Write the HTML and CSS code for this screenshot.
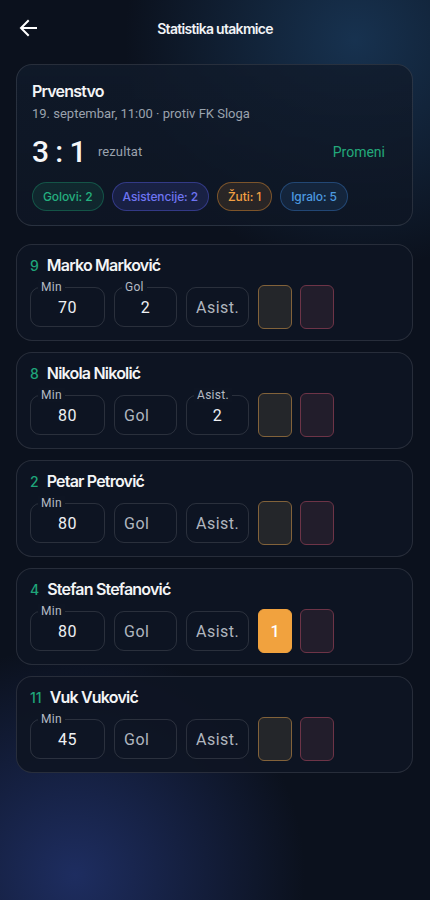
FILE: index.html
```html
<!DOCTYPE html>
<html lang="sr">
<head>
<meta charset="utf-8">
<title>Statistika utakmice</title>
<link rel="stylesheet" href="styles.css">
</head>
<body>
<div class="page">
  <header class="topbar">
    <button class="back" aria-label="Nazad">
      <svg width="18" height="18" viewBox="0 0 18 18" fill="none" stroke="#ffffff" stroke-width="2" stroke-linecap="square"><path d="M17 9H2.5M9 2L2 9l7 7"/></svg>
    </button>
    <h1 class="title">Statistika utakmice</h1>
  </header>

  <main class="content">
    <section class="summary">
      <h2 class="comp">Prvenstvo</h2>
      <div class="meta">19. septembar, 11:00 · protiv FK Sloga</div>
      <div class="score-row">
        <span class="score">3 : 1</span>
        <span class="score-label">rezultat</span>
        <button class="change">Promeni</button>
      </div>
      <div class="chips">
        <span class="chip chip-green">Golovi: 2</span>
        <span class="chip chip-indigo">Asistencije: 2</span>
        <span class="chip chip-orange">Žuti: 1</span>
        <span class="chip chip-blue">Igralo: 5</span>
      </div>
    </section>

    <section class="player">
      <div class="pname"><span class="num">9</span>Marko Marković</div>
      <div class="fields">
        <div class="field f-min"><span class="flabel">Min</span><span class="val">70</span></div>
        <div class="field f-sm"><span class="flabel">Gol</span><span class="val">2</span></div>
        <div class="field f-sm"><span class="ph">Asist.</span></div>
        <div class="ycard"></div>
        <div class="rcard"></div>
      </div>
    </section>

    <section class="player">
      <div class="pname"><span class="num">8</span>Nikola Nikolić</div>
      <div class="fields">
        <div class="field f-min"><span class="flabel">Min</span><span class="val">80</span></div>
        <div class="field f-sm"><span class="ph">Gol</span></div>
        <div class="field f-sm"><span class="flabel">Asist.</span><span class="val">2</span></div>
        <div class="ycard"></div>
        <div class="rcard"></div>
      </div>
    </section>

    <section class="player">
      <div class="pname"><span class="num">2</span>Petar Petrović</div>
      <div class="fields">
        <div class="field f-min"><span class="flabel">Min</span><span class="val">80</span></div>
        <div class="field f-sm"><span class="ph">Gol</span></div>
        <div class="field f-sm"><span class="ph">Asist.</span></div>
        <div class="ycard"></div>
        <div class="rcard"></div>
      </div>
    </section>

    <section class="player">
      <div class="pname"><span class="num">4</span>Stefan Stefanović</div>
      <div class="fields">
        <div class="field f-min"><span class="flabel">Min</span><span class="val">80</span></div>
        <div class="field f-sm"><span class="ph">Gol</span></div>
        <div class="field f-sm"><span class="ph">Asist.</span></div>
        <div class="ycard on">1</div>
        <div class="rcard"></div>
      </div>
    </section>

    <section class="player">
      <div class="pname"><span class="num">11</span>Vuk Vuković</div>
      <div class="fields">
        <div class="field f-min"><span class="flabel">Min</span><span class="val">45</span></div>
        <div class="field f-sm"><span class="ph">Gol</span></div>
        <div class="field f-sm"><span class="ph">Asist.</span></div>
        <div class="ycard"></div>
        <div class="rcard"></div>
      </div>
    </section>
  </main>
</div>
</body>
</html>
```

FILE: styles.css
```css
* { box-sizing: border-box; }

html, body {
  margin: 0;
  padding: 0;
}

body {
  width: 430px;
  height: 900px;
  overflow: hidden;
  font-family: Roboto, "Noto Sans", sans-serif;
  color: #e8eaee;
  background-color: #0b111d;
  background-image:
    radial-gradient(circle at 355px 40px, rgba(26, 58, 92, 0.8) 0px, rgba(26, 58, 92, 0) 230px),
    radial-gradient(circle at 75px 875px, rgba(33, 50, 108, 0.85) 0px, rgba(33, 50, 108, 0) 230px);
}

.page {
  display: flex;
  flex-direction: column;
}

.topbar {
  height: 56px;
  display: flex;
  align-items: center;
  justify-content: center;
  position: relative;
}

.back {
  position: absolute;
  left: 19px;
  top: 19px;
  width: 18px;
  height: 18px;
  padding: 0;
  border: 0;
  background: none;
  display: flex;
}

.title {
  margin: 0;
  font-family: Inter, "Noto Sans", sans-serif;
  font-size: 14px;
  font-weight: 600;
  color: #f1f3f6;
  letter-spacing: -0.7px;
}

.content {
  display: flex;
  flex-direction: column;
  gap: 11px;
  padding: 8px 17px 0 16px;
}

.summary {
  border: 1px solid rgba(255, 255, 255, 0.11);
  border-radius: 16px;
  background: linear-gradient(180deg, rgba(17, 27, 43, 0.82) 0%, rgba(14, 22, 36, 0.9) 100%);
  padding: 15px 16px 14px 15px;
  margin-bottom: 7px;
}

.comp {
  margin: 0;
  font-family: Inter, "Noto Sans", sans-serif;
  font-weight: 600;
  font-size: 16px;
  line-height: 22px;
  color: #f3f4f6;
  letter-spacing: -0.8px;
}

.meta {
  margin-top: 3px;
  font-size: 13px;
  line-height: 18px;
  color: #9aa2ad;
  letter-spacing: 0;
}

.score-row {
  margin-top: 11px;
  display: flex;
  align-items: center;
  height: 36px;
}

.score {
  font-size: 30px;
  line-height: 36px;
  font-weight: 500;
  color: #f5f6f8;
  letter-spacing: -0.6px;
}

.score-label {
  margin-left: 12px;
  margin-top: -2px;
  font-size: 13px;
  color: #9aa2ad;
  letter-spacing: 0.1px;
}

.change {
  margin-left: auto;
  margin-right: -1px;
  padding: 8px 12px;
  border: 0;
  background: none;
  font-family: Roboto, "Noto Sans", sans-serif;
  font-size: 14px;
  color: #23a97b;
  letter-spacing: 0;
}

.chips {
  margin-top: 12px;
  display: flex;
  gap: 8px;
}

.chip {
  height: 29px;
  display: inline-flex;
  align-items: center;
  padding: 0 10px;
  border-radius: 15px;
  border: 1px solid;
  font-family: Inter, "Noto Sans", sans-serif;
  font-size: 12px;
  font-weight: 500;
  letter-spacing: -0.1px;
}

.chip-green {
  color: #24b07f;
  background: rgba(30, 170, 120, 0.12);
  border-color: rgba(30, 170, 120, 0.35);
}

.chip-indigo {
  color: #6e74f2;
  background: rgba(90, 95, 235, 0.16);
  border-color: rgba(90, 95, 235, 0.4);
}

.chip-orange {
  color: #f2a043;
  background: rgba(240, 150, 50, 0.12);
  border-color: rgba(240, 150, 50, 0.42);
}

.chip-blue {
  color: #4c9ae0;
  background: rgba(60, 130, 210, 0.13);
  border-color: rgba(60, 130, 210, 0.38);
}

.player {
  border: 1px solid rgba(255, 255, 255, 0.11);
  border-radius: 16px;
  background: rgba(14, 21, 35, 0.92);
  padding: 9px 13px 11px 13px;
}

.pname {
  display: flex;
  align-items: baseline;
  height: 22px;
  line-height: 22px;
  font-family: Inter, "Noto Sans", sans-serif;
  font-weight: 600;
  font-size: 16px;
  color: #f3f4f6;
  letter-spacing: -0.8px;
}

.num {
  margin-right: 8px;
  font-size: 14px;
  font-weight: 500;
  color: #1fa57a;
  letter-spacing: 0;
}

.fields {
  margin-top: 9px;
  height: 44px;
  display: flex;
  align-items: center;
  gap: 9px;
}

.field {
  position: relative;
  height: 40px;
  border: 1px solid rgba(255, 255, 255, 0.12);
  border-radius: 10px;
  display: flex;
  align-items: center;
  font-size: 16px;
  letter-spacing: 0.5px;
}

.f-min { width: 75px; }
.f-sm { width: 63px; }

.flabel {
  position: absolute;
  left: 7px;
  top: -8px;
  padding: 0 3px;
  font-size: 12px;
  line-height: 14px;
  color: #b4bac3;
  letter-spacing: 0.3px;
  background: #0e1523;
}

.val {
  width: 100%;
  text-align: center;
  color: #eef0f3;
  padding-top: 1px;
}

.ph {
  padding-left: 9px;
  color: #b0b6bf;
  padding-top: 1px;
}

.ycard, .rcard {
  width: 34px;
  height: 44px;
  border-radius: 6px;
  border: 1.5px solid;
  display: flex;
  align-items: center;
  justify-content: center;
}

.ycard {
  background: #24262a;
  border-color: #82623a;
}

.rcard {
  margin-left: -1px;
  background: #221d2b;
  border-color: #6d3447;
}

.ycard.on {
  background: #f1a23e;
  border-color: #f1a23e;
  color: #ffffff;
  font-size: 16px;
  font-weight: 500;
}
```
